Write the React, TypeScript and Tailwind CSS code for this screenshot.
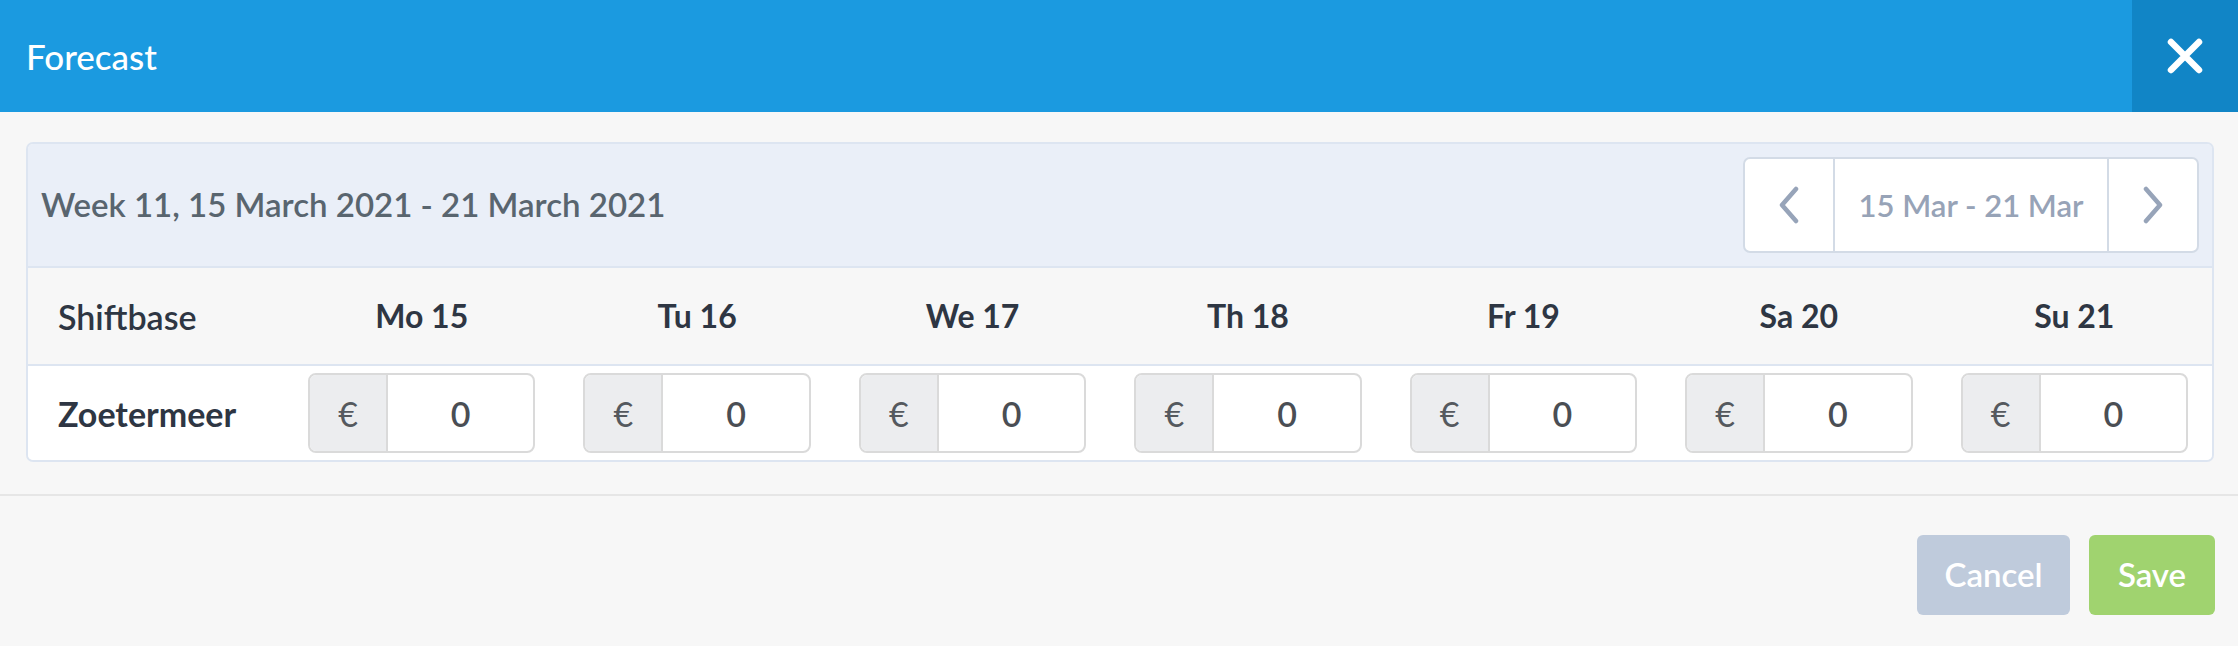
const DAYS = ['Mo 15', 'Tu 16', 'We 17', 'Th 18', 'Fr 19', 'Sa 20', 'Su 21'];

function Chevron({ dir }: { dir: 'left' | 'right' }) {
  return (
    <svg width="22" height="38" viewBox="0 0 22 38" fill="none">
      <path
        d={dir === 'left' ? 'M18 3 L4 19 L18 35' : 'M4 3 L18 19 L4 35'}
        stroke="#97a4b9"
        strokeWidth="4.5"
        strokeLinecap="round"
        strokeLinejoin="round"
      />
    </svg>
  );
}

function MoneyInput() {
  return (
    <div className="flex h-[80px] border-2 border-[#dadada] rounded-[8px] overflow-hidden bg-white">
      <div className="w-[78px] shrink-0 bg-[#ecedef] border-r-2 border-[#dadada] flex items-center justify-center text-[34px] text-[#55595e]">
        €
      </div>
      <div className="flex-1 flex items-center justify-center text-[34px] font-semibold text-[#4a4e54]">0</div>
    </div>
  );
}

export default function App() {
  return (
    <div className="w-[2238px] h-[646px] bg-[#f7f7f7] font-['Lato',sans-serif]">
      <header className="flex h-[112px] bg-[#1b9ae0]">
        <div className="flex-1 flex items-center pl-[26px] text-white text-[35px] font-medium">Forecast</div>
        <button className="w-[106px] bg-[#1185c6] flex items-center justify-center">
          <svg width="36" height="36" viewBox="0 0 36 36" fill="none">
            <path d="M4 4 L32 32 M32 4 L4 32" stroke="white" strokeWidth="6.5" strokeLinecap="round" />
          </svg>
        </button>
      </header>

      <div className="pl-[26px] pr-[24px] pt-[30px] pb-[32px] border-b-2 border-[#e6e6e6]">
        <div className="border-2 border-[#dde5f1] rounded-[7px] overflow-hidden">
          <div className="flex items-center justify-between bg-[#eaeff8] border-b-2 border-[#dde5f1] pl-[13px] pr-[13px] py-[13px]">
            <div className="text-[33px] font-semibold text-[#59656f]">Week 11, 15 March 2021 - 21 March 2021</div>
            <div className="flex h-[96px] bg-white border-2 border-[#d3dbe6] rounded-[7px]">
              <button className="w-[88px] flex items-center justify-center">
                <Chevron dir="left" />
              </button>
              <div className="w-[276px] border-x-2 border-[#d3dbe6] flex items-center justify-center text-[31px] font-semibold text-[#97a3b7]">
                15 Mar - 21 Mar
              </div>
              <button className="w-[88px] flex items-center justify-center">
                <Chevron dir="right" />
              </button>
            </div>
          </div>

          <div className="grid grid-cols-[256px_repeat(7,1fr)] h-[98px] items-center bg-[#f7f7f7] border-b-2 border-[#dde5f1]">
            <div className="pl-[30px] text-[34px] font-semibold text-[#2e3643]">Shiftbase</div>
            {DAYS.map(d => (
              <div key={d} className="text-center text-[32px] font-bold text-[#2e3643]">{d}</div>
            ))}
          </div>

          <div className="grid grid-cols-[256px_repeat(7,1fr)] items-center bg-white pt-[7px] pb-[7px]">
            <div className="pl-[30px] text-[34px] font-bold text-[#2e3643]">Zoetermeer</div>
            {DAYS.map(d => (
              <div key={d} className="px-[24px]">
                <MoneyInput />
              </div>
            ))}
          </div>
        </div>
      </div>

      <div className="flex justify-end gap-[19px] pr-[23px] pt-[39px]">
        <button className="w-[153px] h-[80px] rounded-[6px] bg-[#bfcbdc] text-white text-[33px] font-semibold">Cancel</button>
        <button className="w-[126px] h-[80px] rounded-[6px] bg-[#a0d36f] text-white text-[33px] font-semibold">Save</button>
      </div>
    </div>
  );
}
